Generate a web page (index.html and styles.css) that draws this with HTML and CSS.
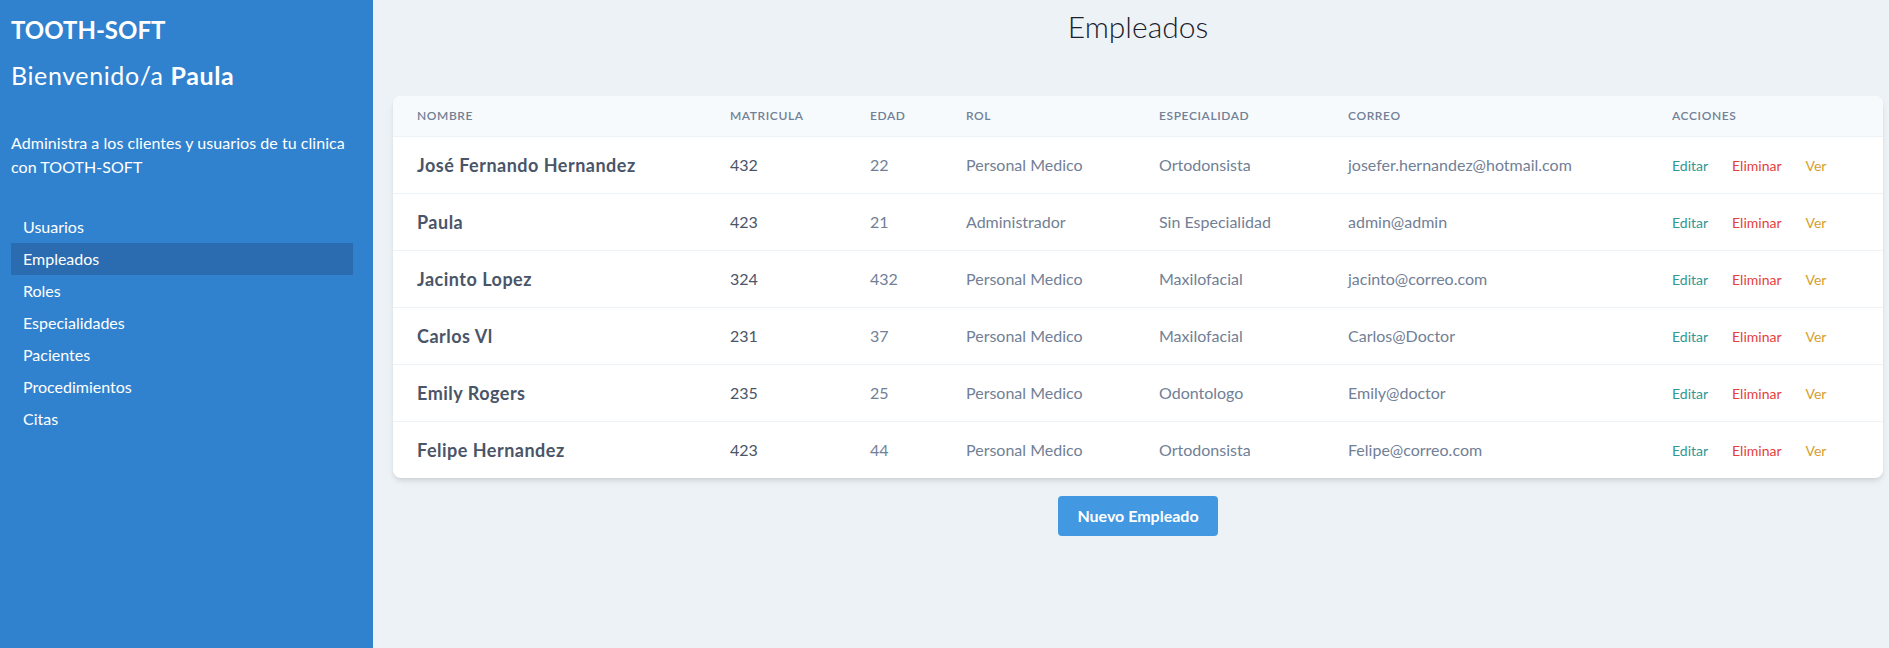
FILE: index.html
```html
<!DOCTYPE html>
<html lang="es">
<head>
<meta charset="utf-8">
<title>Empleados - TOOTH-SOFT</title>
<link rel="stylesheet" href="styles.css">
</head>
<body>
<div class="app">
  <aside class="sidebar">
    <h1 class="brand">TOOTH-SOFT</h1>
    <h2 class="welcome">Bienvenido/a <strong>Paula</strong></h2>
    <p class="intro">Administra a los clientes y usuarios de tu clinica con TOOTH-SOFT</p>
    <nav class="nav">
      <a class="nav-item" href="#">Usuarios</a>
      <a class="nav-item active" href="#">Empleados</a>
      <a class="nav-item" href="#">Roles</a>
      <a class="nav-item" href="#">Especialidades</a>
      <a class="nav-item" href="#">Pacientes</a>
      <a class="nav-item" href="#">Procedimientos</a>
      <a class="nav-item" href="#">Citas</a>
    </nav>
  </aside>
  <main class="main">
    <h1 class="page-title">Empleados</h1>
    <div class="card">
      <table class="table">
        <colgroup>
          <col class="c-name"><col class="c-mat"><col class="c-age"><col class="c-rol"><col class="c-esp"><col class="c-mail"><col class="c-act">
        </colgroup>
        <thead>
          <tr><th>Nombre</th><th>Matricula</th><th>Edad</th><th>Rol</th><th>Especialidad</th><th>Correo</th><th>Acciones</th></tr>
        </thead>
        <tbody>
          <tr><td class="name">José Fernando Hernandez</td><td class="dark">432</td><td>22</td><td>Personal Medico</td><td>Ortodonsista</td><td>josefer.hernandez@hotmail.com</td><td><a class="act edit" href="#">Editar</a><a class="act del" href="#">Eliminar</a><a class="act view" href="#">Ver</a></td></tr>
          <tr><td class="name">Paula</td><td class="dark">423</td><td>21</td><td>Administrador</td><td>Sin Especialidad</td><td>admin@admin</td><td><a class="act edit" href="#">Editar</a><a class="act del" href="#">Eliminar</a><a class="act view" href="#">Ver</a></td></tr>
          <tr><td class="name">Jacinto Lopez</td><td class="dark">324</td><td>432</td><td>Personal Medico</td><td>Maxilofacial</td><td>jacinto@correo.com</td><td><a class="act edit" href="#">Editar</a><a class="act del" href="#">Eliminar</a><a class="act view" href="#">Ver</a></td></tr>
          <tr><td class="name">Carlos Vl</td><td class="dark">231</td><td>37</td><td>Personal Medico</td><td>Maxilofacial</td><td>Carlos@Doctor</td><td><a class="act edit" href="#">Editar</a><a class="act del" href="#">Eliminar</a><a class="act view" href="#">Ver</a></td></tr>
          <tr><td class="name">Emily Rogers</td><td class="dark">235</td><td>25</td><td>Personal Medico</td><td>Odontologo</td><td>Emily@doctor</td><td><a class="act edit" href="#">Editar</a><a class="act del" href="#">Eliminar</a><a class="act view" href="#">Ver</a></td></tr>
          <tr><td class="name">Felipe Hernandez</td><td class="dark">423</td><td>44</td><td>Personal Medico</td><td>Ortodonsista</td><td>Felipe@correo.com</td><td><a class="act edit" href="#">Editar</a><a class="act del" href="#">Eliminar</a><a class="act view" href="#">Ver</a></td></tr>
        </tbody>
      </table>
    </div>
    <div class="actions-bar">
      <a class="btn" href="#">Nuevo Empleado</a>
    </div>
  </main>
</div>
</body>
</html>
```

FILE: styles.css
```css
* { box-sizing: border-box; }
html, body { margin: 0; padding: 0; }
body {
  font-family: Lato, "Open Sans", "Liberation Sans", sans-serif;
  background: #edf2f7;
  color: #4a5568;
}
.app { display: flex; min-height: 648px; }

.sidebar {
  width: 373px;
  flex: 0 0 373px;
  background: #3182ce;
  color: #fff;
  padding: 14px 20px 0 11px;
}
.brand {
  margin: 0;
  font-size: 24px;
  line-height: 32px;
  font-weight: 700;
}
.welcome {
  margin: 13px 0 0;
  font-size: 25px;
  line-height: 32px;
  font-weight: 400;
  letter-spacing: 0.6px;
}
.welcome strong { font-weight: 700; }
.intro {
  margin: 40px 0 0;
  font-size: 16px;
  line-height: 24px;
  letter-spacing: 0.05px;
}
.nav { margin-top: 32px; display: flex; flex-direction: column; }
.nav-item {
  display: block;
  height: 32px;
  line-height: 32px;
  padding: 0 12px;
  color: #fff;
  font-size: 16px;
  text-decoration: none;
}
.nav-item.active { background: #2b6cb0; }

.main {
  flex: 1;
  padding: 0 6px 0 20px;
}
.page-title {
  margin: 8px 0 0;
  text-align: center;
  font-size: 30px;
  line-height: 36px;
  font-weight: 300;
  color: #1a202c;
}
.card {
  margin-top: 52px;
  background: #fff;
  border-radius: 8px;
  overflow: hidden;
  box-shadow: 0 4px 6px -1px rgba(0,0,0,.1), 0 2px 4px -1px rgba(0,0,0,.06);
}
.table {
  width: 100%;
  border-collapse: collapse;
  table-layout: fixed;
}
.c-name { width: 313px; }
.c-mat { width: 140px; }
.c-age { width: 96px; }
.c-rol { width: 193px; }
.c-esp { width: 189px; }
.c-mail { width: 324px; }
.c-act { width: 235px; }
.table th {
  height: 40px;
  padding: 0 24px;
  text-align: left;
  background: #f7fafc;
  border-bottom: 1px solid #edf2f7;
  font-size: 12px;
  font-weight: 600;
  text-transform: uppercase;
  letter-spacing: 0.05em;
  color: #718096;
}
.table td {
  height: 57px;
  padding: 0 24px;
  border-bottom: 1px solid #edf2f7;
  font-size: 16px;
  color: #718096;
  white-space: nowrap;
}
.table tbody tr:last-child td { border-bottom: none; }
.table td.name { font-size: 18px; font-weight: 700; color: #4a5568; letter-spacing: 0.5px; }
.table td.dark { color: #4a5568; }
.act { font-size: 14px; text-decoration: none; margin-right: 24px; }
.edit { color: #319795; }
.del { color: #e53e3e; }
.view { color: #d69e2e; }

.actions-bar {
  display: flex;
  justify-content: center;
  margin-top: 18px;
}
.btn {
  display: inline-block;
  min-width: 160px;
  height: 40px;
  line-height: 40px;
  padding: 0 16px;
  text-align: center;
  background: #4299e1;
  color: #fff;
  font-weight: 700;
  font-size: 16px;
  border-radius: 4px;
  text-decoration: none;
}
```
